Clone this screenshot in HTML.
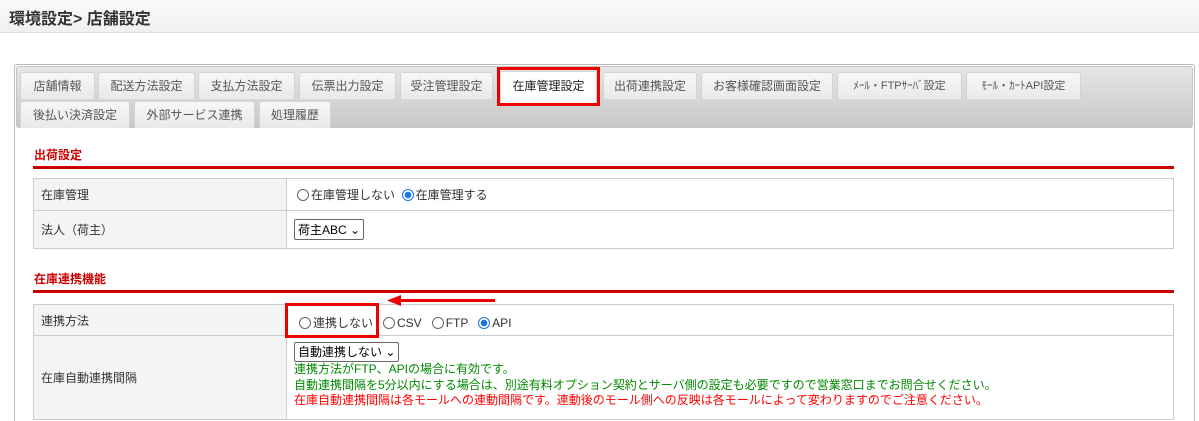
<!DOCTYPE html>
<html style="width:1199px;height:421px;overflow:hidden"><head><meta charset="utf-8"><style>
*{margin:0;padding:0;box-sizing:border-box}
body{width:1199px;height:421px;overflow:hidden;background:#fff;font-family:"Liberation Sans","Noto Sans CJK JP",sans-serif;font-size:12px;color:#333;position:relative}
.hdr{position:absolute;left:0;top:0;width:1199px;height:33px;background:linear-gradient(#fafafa,#f0f0f0);border-bottom:1px solid #ddd}
.hdr h1{position:absolute;left:9px;top:5px;font-size:16px;font-weight:bold;color:#333}
.panel{position:absolute;left:14px;top:64px;width:1181px;height:357px;border:1px solid #bbb;border-bottom:none;border-radius:3px 3px 0 0;background:#fff}
.tabbar{position:absolute;left:16px;top:66px;width:1177px;height:62px;background:linear-gradient(#e6e6e6,#c8c8c8);border:1px solid #c4c4c4;border-radius:3px}
.tab{position:absolute;height:27px;background:linear-gradient(#f7f7f7,#e9e9e9);border:1px solid #d3d3d3;border-bottom:none;border-radius:3px 3px 0 0;text-align:center;line-height:27px;color:#555;font-size:12px}
.tab.act{background:#fff;color:#222}
.sec{position:absolute;left:34px;color:#c00;font-weight:bold;font-size:12px}
.rl{position:absolute;left:33px;width:1141px;height:3px;background:#c00}
table{position:absolute;left:33px;width:1141px;border-collapse:collapse}
td{border:1px solid #ccc;padding:0 7px;vertical-align:middle}
td.l{background:#f4f4f4;width:253px}
.rad{display:inline-block;width:12px;height:12px;border:1px solid #666;border-radius:50%;vertical-align:-2px;margin-right:2px;background:#fff}
.rad.on{border:1px solid #1a73e8;background:radial-gradient(#1a73e8 3px,#fff 3.5px)}
.sel{display:inline-block;border:1px solid #666;border-radius:2px;padding:1px 3px;font-size:12px;background:#fff;color:#000}
</style></head><body>
<div class="hdr"><h1>環境設定&gt; 店舗設定</h1></div>
<div class="panel"></div>
<div class="tabbar"></div>
<div class="tab" style="left:20px;top:72px;width:75px">店舗情報</div>
<div class="tab" style="left:98px;top:72px;width:97px">配送方法設定</div>
<div class="tab" style="left:198px;top:72px;width:97px">支払方法設定</div>
<div class="tab" style="left:299px;top:72px;width:97px">伝票出力設定</div>
<div class="tab" style="left:400px;top:72px;width:93px">受注管理設定</div>
<div class="tab act" style="left:500px;top:71px;width:97px;height:32px;line-height:28px">在庫管理設定</div>
<div style="position:absolute;left:497px;top:67px;width:103px;height:39px;border:3px solid #e00"></div>
<div class="tab" style="left:603px;top:72px;width:94px">出荷連携設定</div>
<div class="tab" style="left:701px;top:72px;width:132px">お客様確認画面設定</div>
<div class="tab" style="left:837px;top:72px;width:125px;font-size:11px">ﾒｰﾙ・FTPｻｰﾊﾞ設定</div>
<div class="tab" style="left:966px;top:72px;width:115px;font-size:11px">ﾓｰﾙ・ｶｰﾄAPI設定</div>
<div class="tab" style="left:20px;top:101px;width:110px">後払い決済設定</div>
<div class="tab" style="left:134px;top:101px;width:121px">外部サービス連携</div>
<div class="tab" style="left:259px;top:101px;width:72px">処理履歴</div>

<div class="sec" style="top:146px">出荷設定</div>
<div class="rl" style="top:166px"></div>
<table style="top:178px">
<tr style="height:32px"><td class="l">在庫管理</td><td><span class="rad" style="margin-left:3px"></span>在庫管理しない&nbsp; <span class="rad on"></span>在庫管理する</td></tr>
<tr style="height:38px"><td class="l">法人（荷主）</td><td><span class="sel">荷主ABC ⌄</span></td></tr>
</table>

<div class="sec" style="top:270px">在庫連携機能</div>
<div class="rl" style="top:290px"></div>
<table style="top:304px">
<tr style="height:31px"><td class="l">連携方法</td><td style="padding-top:4px"><span class="rad" style="margin-left:5px"></span>連携しない &nbsp;&nbsp;<span class="rad"></span>CSV &nbsp;&nbsp;<span class="rad"></span>FTP &nbsp;&nbsp;<span class="rad on"></span>API</td></tr>
<tr style="height:84px"><td class="l">在庫自動連携間隔</td><td style="line-height:15.5px;vertical-align:top;padding-top:6px"><span class="sel" style="line-height:16px">自動連携しない ⌄</span><br><span style="color:#080">連携方法がFTP、APIの場合に有効です。<br>自動連携間隔を5分以内にする場合は、別途有料オプション契約とサーバ側の設定も必要ですので営業窓口までお問合せください。</span><br><span style="color:#f00">在庫自動連携間隔は各モールへの連動間隔です。連動後のモール側への反映は各モールによって変わりますのでご注意ください。</span></td></tr>
</table>
<div style="position:absolute;left:285px;top:303px;width:94px;height:35px;border:3px solid #e00"></div>
<svg style="position:absolute;left:385px;top:294px" width="115" height="14"><line x1="12" y1="6.5" x2="110" y2="6.5" stroke="#e00" stroke-width="3"/><polygon points="2,6.5 16,1 16,12" fill="#e00"/></svg>
</body></html>
